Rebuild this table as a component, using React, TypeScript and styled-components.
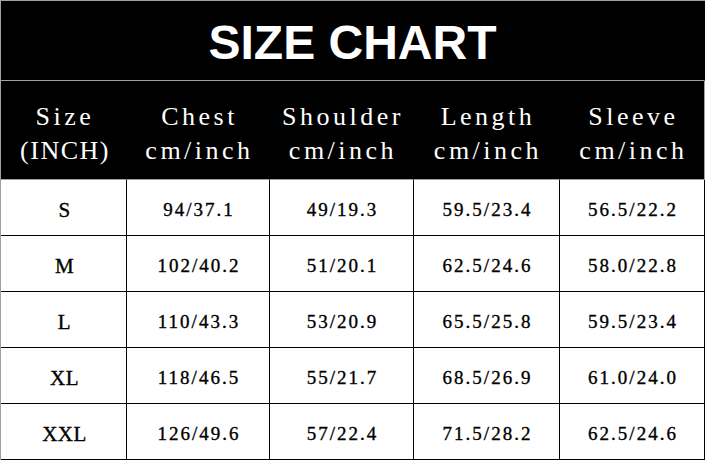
import React from 'react';
import styled, { createGlobalStyle } from 'styled-components';

const GlobalStyle = createGlobalStyle`
  html, body {
    margin: 0;
    padding: 0;
    background: #ffffff;
  }
`;

const columns = '126px 143px 144px 146px 145px';

const Chart = styled.div`
  width: 705px;
  height: 460px;
  box-sizing: border-box;
  border-top: 1px solid #a0a0a0;
  border-left: 1px solid #a0a0a0;
  display: flex;
  flex-direction: column;
  background: #ffffff;
`;

const TitleBar = styled.div`
  height: 80px;
  box-sizing: border-box;
  border-bottom: 1px solid #a0a0a0;
  border-right: 1px solid #000;
  background: #000;
  color: #fff;
  display: flex;
  align-items: center;
  justify-content: center;
  font-family: 'Liberation Sans', Arial, sans-serif;
  font-weight: 700;
  font-size: 48px;
  padding-top: 3px;
`;

const Row = styled.div<{ $height: number }>`
  display: grid;
  grid-template-columns: ${columns};
  height: ${p => p.$height}px;
`;

const HeadCell = styled.div`
  box-sizing: border-box;
  background: #000;
  color: #fff;
  border-right: 1px solid #000;
  border-bottom: 1px solid #a0a0a0;
  display: flex;
  flex-direction: column;
  align-items: center;
  justify-content: center;
  font-family: 'Liberation Serif', 'Times New Roman', serif;
  font-size: 26px;
  letter-spacing: 3.5px;
  line-height: 34px;
  padding-top: 7px;
  padding-left: 3px;
  &:last-child {
    border-right-color: #a0a0a0;
  }
`;

const HeadLine = styled.span<{ $tight?: boolean }>`
  letter-spacing: ${p => (p.$tight ? '1.5px' : 'inherit')};
`;

const Cell = styled.div`
  box-sizing: border-box;
  border-right: 1px solid #000;
  border-bottom: 1px solid #000;
  display: flex;
  align-items: center;
  justify-content: center;
  color: #000;
  font-family: 'Liberation Serif', 'Times New Roman', serif;
  font-size: 19px;
  letter-spacing: 2px;
  -webkit-text-stroke: 0.35px #000;
  padding-top: 5px;
  padding-left: 2px;
`;

const SizeLabel = styled(Cell)`
  font-size: 21px;
  letter-spacing: 0.5px;
`;

const headers = [
  ['Size', '(INCH)'],
  ['Chest', 'cm/inch'],
  ['Shoulder', 'cm/inch'],
  ['Length', 'cm/inch'],
  ['Sleeve', 'cm/inch'],
];

const rows = [
  ['S', '94/37.1', '49/19.3', '59.5/23.4', '56.5/22.2'],
  ['M', '102/40.2', '51/20.1', '62.5/24.6', '58.0/22.8'],
  ['L', '110/43.3', '53/20.9', '65.5/25.8', '59.5/23.4'],
  ['XL', '118/46.5', '55/21.7', '68.5/26.9', '61.0/24.0'],
  ['XXL', '126/49.6', '57/22.4', '71.5/28.2', '62.5/24.6'],
];

export default function App() {
  return (
    <>
      <GlobalStyle />
      <Chart>
        <TitleBar>SIZE CHART</TitleBar>
        <Row $height={99}>
          {headers.map(([top, bottom]) => (
            <HeadCell key={top}>
              <HeadLine>{top}</HeadLine>
              <HeadLine $tight={bottom === '(INCH)'}>{bottom}</HeadLine>
            </HeadCell>
          ))}
        </Row>
        {rows.map(r => (
          <Row key={r[0]} $height={56}>
            <SizeLabel>{r[0]}</SizeLabel>
            {r.slice(1).map((v, i) => (
              <Cell key={i}>{v}</Cell>
            ))}
          </Row>
        ))}
      </Chart>
    </>
  );
}
